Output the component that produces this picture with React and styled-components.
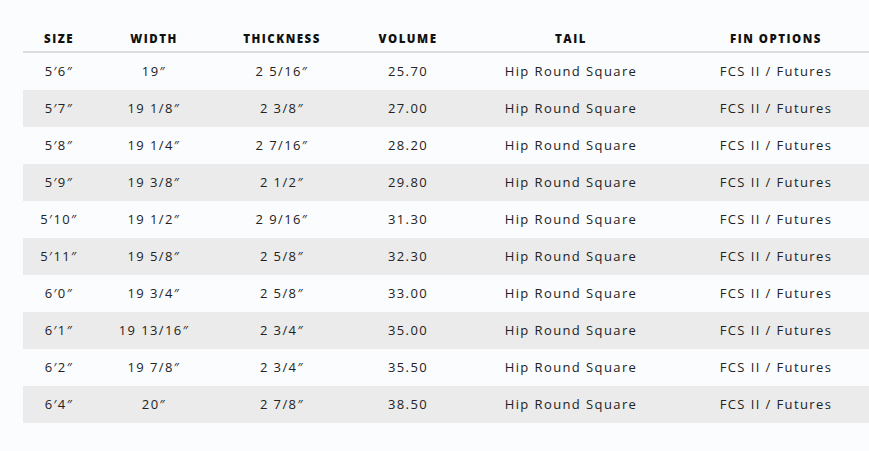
import React from "react";
import styled, { createGlobalStyle } from "styled-components";

const Global = createGlobalStyle`
  html, body { margin: 0; padding: 0; background: #fbfcfe; overflow: hidden; }
  body { font-family: "Open Sans", "Liberation Sans", sans-serif; }
`;

const Page = styled.div`
  width: 869px;
  overflow: hidden;
`;

const Wrap = styled.div`
  width: 880px;
  padding: 27px 0 0 23px;
`;

const COLS = "72px 118px 138px 114px 212px 198px";

const HeadRow = styled.div`
  display: grid;
  grid-template-columns: ${COLS};
  box-sizing: border-box;
  height: 26px;
  align-items: center;
  border-bottom: 2px solid #dcdcdc;
`;

const Th = styled.div`
  text-align: center;
  font-weight: 800;
  font-size: 11.5px;
  letter-spacing: 1.5px;
  color: #111;
  line-height: 20px;
  white-space: nowrap;
`;

const Row = styled.div`
  display: grid;
  grid-template-columns: ${COLS};
  height: 37px;
  align-items: center;
  background: ${(p) => (p.$alt ? "#ebebeb" : "transparent")};
`;

const Td = styled.div`
  text-align: center;
  font-size: 13px;
  line-height: 18px;
  margin-top: -2px;
  letter-spacing: 1.4px;
  color: #222;
  white-space: nowrap;
`;

const heads = ["SIZE", "WIDTH", "THICKNESS", "VOLUME", "TAIL", "FIN OPTIONS"];
const rows = [
  ["5′6″", "19″", "2 5/16″", "25.70"],
  ["5′7″", "19 1/8″", "2 3/8″", "27.00"],
  ["5′8″", "19 1/4″", "2 7/16″", "28.20"],
  ["5′9″", "19 3/8″", "2 1/2″", "29.80"],
  ["5′10″", "19 1/2″", "2 9/16″", "31.30"],
  ["5′11″", "19 5/8″", "2 5/8″", "32.30"],
  ["6′0″", "19 3/4″", "2 5/8″", "33.00"],
  ["6′1″", "19 13/16″", "2 3/4″", "35.00"],
  ["6′2″", "19 7/8″", "2 3/4″", "35.50"],
  ["6′4″", "20″", "2 7/8″", "38.50"],
];

export default function App() {
  return (
    <>
      <Global />
      <Page>
        <Wrap>
          <HeadRow>
            {heads.map((h) => (
              <Th key={h}>{h}</Th>
            ))}
          </HeadRow>
          {rows.map((r, i) => (
            <Row key={i} $alt={i % 2 === 1}>
              {r.map((c, j) => (
                <Td key={j}>{c}</Td>
              ))}
              <Td>Hip Round Square</Td>
              <Td>FCS II / Futures</Td>
            </Row>
          ))}
        </Wrap>
      </Page>
    </>
  );
}
